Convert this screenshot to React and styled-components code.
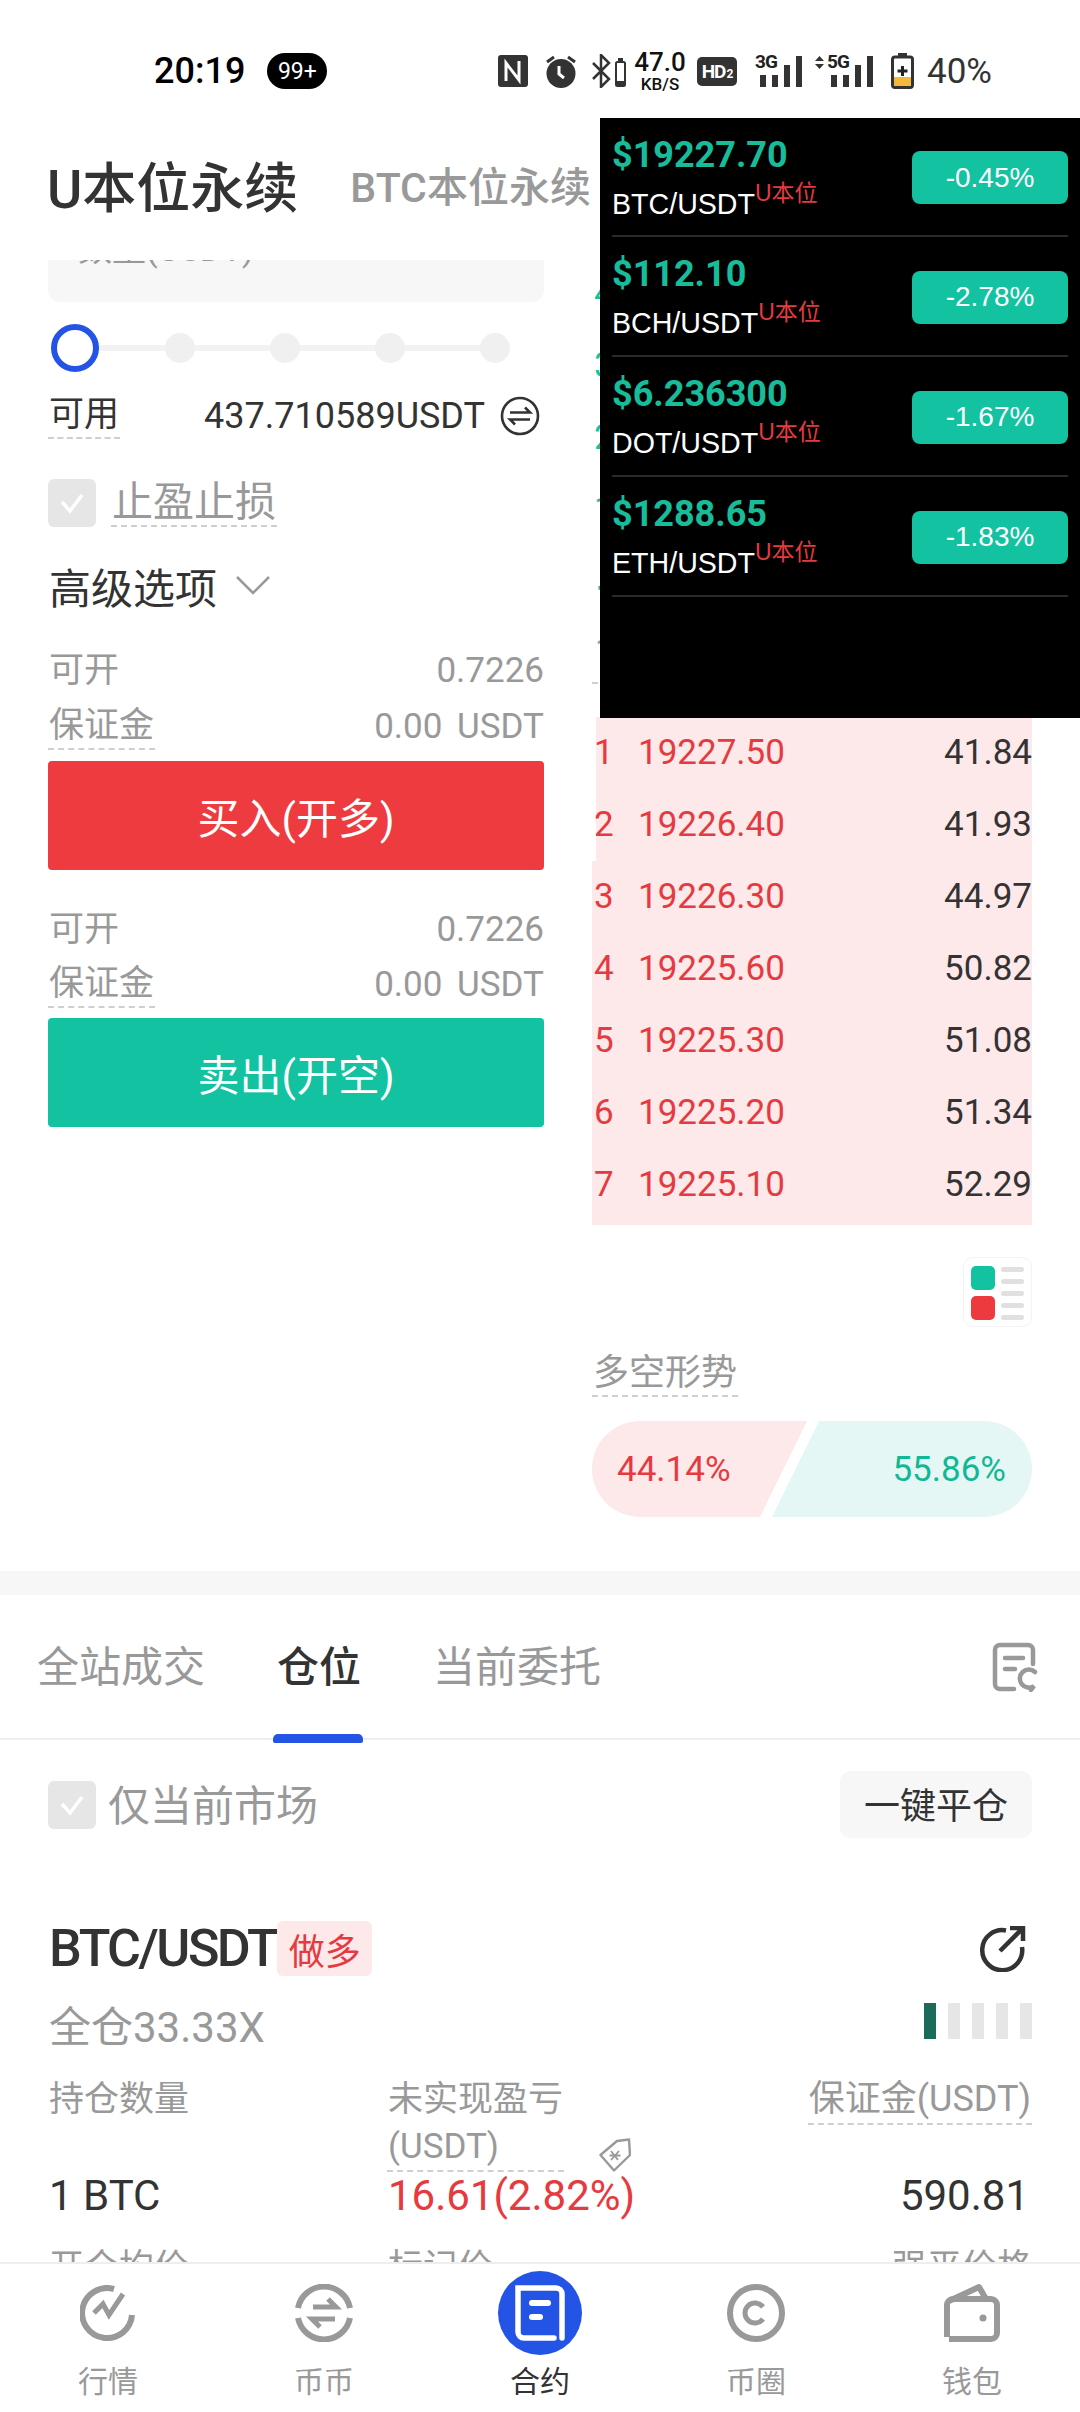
import React from "react";
import styled, { createGlobalStyle } from "styled-components";

const BLUE = "#2354e6";
const RED = "#e53a40";
const TEAL = "#12c2a0";
const DARK = "#333333";
const GRAY = "#999999";
const NUM_FONT = `Roboto, "Noto Sans CJK SC", sans-serif`;
const ARIAL_FONT = `"Liberation Sans", "Noto Sans CJK SC", sans-serif`;

const tickers = [
  { price: "$19227.70", pair: "BTC/USDT", change: "-0.45%" },
  { price: "$112.10", pair: "BCH/USDT", change: "-2.78%" },
  { price: "$6.236300", pair: "DOT/USDT", change: "-1.67%" },
  { price: "$1288.65", pair: "ETH/USDT", change: "-1.83%" },
];

const asks = [
  { n: 4, price: "19229.40", size: "39.12" },
  { n: 3, price: "19229.10", size: "36.47" },
  { n: 2, price: "19228.60", size: "28.05" },
  { n: 1, price: "19228.20", size: "21.33" },
];

const bids = [
  { n: 1, price: "19227.50", size: "41.84", depth: 99 },
  { n: 2, price: "19226.40", size: "41.93", depth: 99 },
  { n: 3, price: "19226.30", size: "44.97", depth: 100 },
  { n: 4, price: "19225.60", size: "50.82", depth: 100 },
  { n: 5, price: "19225.30", size: "51.08", depth: 100 },
  { n: 6, price: "19225.20", size: "51.34", depth: 100 },
  { n: 7, price: "19225.10", size: "52.29", depth: 100 },
];

const GlobalStyle = createGlobalStyle`
  html, body {
    margin: 0;
    padding: 0;
    background: #fff;
  }
  * {
    box-sizing: border-box;
  }
`;

const Screen = styled.div`
  position: relative;
  width: 1080px;
  height: 2412px;
  display: flex;
  flex-direction: column;
  overflow: hidden;
  background: #fff;
  color: ${DARK};
  font-family: ${NUM_FONT};
`;

/* status bar */
const StatusBar = styled.div`
  flex: none;
  height: 118px;
  padding: 24px 88px 0 154px;
  display: flex;
  align-items: center;
  color: #000;
`;

const Clock = styled.span`
  font-size: 36px;
  font-weight: 500;
`;

const Badge = styled.span`
  margin-left: 22px;
  width: 60px;
  height: 36px;
  border-radius: 18px;
  background: #000;
  color: #fff;
  font-size: 23px;
  display: flex;
  align-items: center;
  justify-content: center;
`;

const StatusRight = styled.div`
  margin-left: auto;
  display: flex;
  align-items: center;
`;

const Slot = styled.div`
  margin-left: ${(p) => p.$ml || 0}px;
  display: flex;
  align-items: center;
  position: relative;
`;

const Speed = styled.div`
  width: 46px;
  display: flex;
  flex-direction: column;
  align-items: center;
  line-height: 1;
  color: #111;
  span:first-child {
    font-size: 26px;
    font-weight: 500;
  }
  span:last-child {
    font-size: 17px;
    font-weight: 500;
    margin-top: 1px;
  }
`;

const HdBox = styled.div`
  width: 40px;
  height: 29px;
  border-radius: 5px;
  background: #333;
  color: #fff;
  font-size: 19px;
  font-weight: 700;
  letter-spacing: -1px;
  display: flex;
  align-items: center;
  justify-content: center;
  sub {
    font-size: 12px;
    line-height: 1;
    vertical-align: baseline;
    margin: 5px 0 0 1px;
  }
`;

const NetLabel = styled.span`
  position: absolute;
  top: -2px;
  left: ${(p) => p.$left}px;
  font-size: 19px;
  font-weight: 700;
  letter-spacing: -1px;
  line-height: 1;
  color: #222;
`;

const BatteryText = styled.span`
  font-size: 35px;
  color: ${DARK};
`;

/* header */
const Header = styled.div`
  flex: none;
  height: 142px;
  padding: 0 0 10px 47px;
  display: flex;
  align-items: center;
  gap: 52px;
  white-space: nowrap;
`;

const HeaderTab = styled.div`
  font-size: ${(p) => (p.$active ? 54 : 41)}px;
  font-weight: 500;
  color: ${(p) => (p.$active ? DARK : GRAY)};
`;

/* scrolling content */
const Scroll = styled.div`
  flex: 1;
  min-height: 0;
  overflow: hidden;
`;

const Trade = styled.div`
  height: 1311px;
  padding: 0 48px;
  display: flex;
  justify-content: space-between;
  align-items: flex-start;
`;

const LeftCol = styled.div`
  width: 496px;
  display: flex;
  flex-direction: column;
`;

const RightCol = styled.div`
  width: 440px;
  margin-top: -2px;
  display: flex;
  flex-direction: column;
`;

const AmountInput = styled.div`
  margin-top: -62px;
  height: 104px;
  padding: 0 30px 8px;
  border-radius: 12px;
  background: #f7f7f7;
  color: ${GRAY};
  font-size: 34px;
  display: flex;
  align-items: center;
  justify-content: space-between;
  span:last-child {
    margin-right: -4px;
  }
`;

const Slider = styled.div`
  position: relative;
  margin-top: 22px;
  height: 48px;
  padding-left: 3px;
  display: flex;
  align-items: center;
  gap: 75px;
  &::before {
    content: "";
    position: absolute;
    left: 27px;
    width: 420px;
    height: 6px;
    background: #f2f2f2;
  }
`;

const SliderHandle = styled.div`
  position: relative;
  width: 48px;
  height: 48px;
  margin-right: -9px;
  border-radius: 50%;
  border: 6px solid ${BLUE};
  background: #fff;
`;

const SliderDot = styled.div`
  position: relative;
  width: 30px;
  height: 30px;
  border-radius: 50%;
  background: #f0f0f0;
`;

const Row = styled.div`
  margin-top: ${(p) => p.$mt || 0}px;
  display: flex;
  align-items: center;
  justify-content: space-between;
`;

const Dashed = styled.span`
  display: inline-block;
  padding: 0 1px;
  font-size: ${(p) => p.$size || 35}px;
  line-height: ${(p) => p.$lh || 44}px;
  color: ${(p) => p.$color || GRAY};
  border-bottom: 2px dashed #cfcfcf;
`;

const StatLabel = styled.span`
  padding-left: 1px;
  font-size: 35px;
  line-height: 44px;
  color: ${GRAY};
`;

const StatValue = styled.span`
  font-size: 35px;
  line-height: 44px;
  word-spacing: 6px;
  color: ${GRAY};
`;

const Available = styled.div`
  padding-right: 4px;
  display: flex;
  align-items: center;
  gap: 15px;
  font-size: 36px;
  color: ${DARK};
`;

const CheckLine = styled.div`
  margin-top: 40px;
  height: 50px;
  display: flex;
  align-items: flex-start;
  gap: 15px;
`;

const CheckBox = styled.div`
  flex: none;
  width: 48px;
  height: 48px;
  border-radius: 6px;
  background: #e6e6e6;
  display: flex;
  align-items: center;
  justify-content: center;
`;

const Advanced = styled.div`
  margin-top: 29px;
  height: 54px;
  padding-left: 1px;
  display: flex;
  align-items: center;
  gap: 18px;
  font-size: 42px;
  color: ${DARK};
`;

const ActionButton = styled.div`
  margin-top: ${(p) => p.$mt}px;
  height: 109px;
  border-radius: 4px;
  background: ${(p) => (p.$buy ? "#ee3b3f" : TEAL)};
  color: #fff;
  font-size: 42px;
  display: flex;
  align-items: center;
  justify-content: center;
`;

/* order book */
const BookRow = styled.div`
  position: relative;
  display: flex;
  align-items: center;
  line-height: 72px;
  font-size: 35px;
  color: ${DARK};
  &:last-child {
    padding-bottom: ${(p) => (p.$bid ? 4 : 0)}px;
  }
`;

const DepthBar = styled.div`
  position: absolute;
  top: 0;
  right: 0;
  bottom: 0;
  background: #fde9e9;
`;

const BookIndex = styled.span`
  position: relative;
  width: 46px;
  padding-left: 2px;
  color: ${(p) => (p.$bid ? RED : TEAL)};
`;

const BookPrice = styled.span`
  position: relative;
  color: ${(p) => (p.$bid ? RED : TEAL)};
`;

const BookSize = styled.span`
  position: relative;
  margin-left: auto;
`;

const MidPrice = styled.div`
  margin-top: 26px;
  padding-left: 3px;
  font-size: 40px;
  line-height: 52px;
  font-weight: 500;
  color: ${TEAL};
`;

const MarkPrice = styled.div`
  width: 180px;
  padding: 0 0 6px 3px;
  font-size: 34px;
  line-height: 52px;
  color: ${GRAY};
  border-bottom: 2px dashed #cfcfcf;
`;

const Bids = styled.div`
  margin-top: 33px;
  display: flex;
  flex-direction: column;
`;

const LayoutToggle = styled.div`
  align-self: flex-end;
  margin-top: 32px;
  width: 69px;
  height: 70px;
  padding: 8px 7px;
  border: 1px solid #f3f3f3;
  border-radius: 10px;
  display: grid;
  grid-template-columns: 24px 23px;
  justify-content: space-between;
`;

const ToggleSquares = styled.div`
  display: flex;
  flex-direction: column;
  gap: 6px;
`;

const ToggleSquare = styled.div`
  width: 24px;
  height: 24px;
  border-radius: 5px;
  background: ${(p) => (p.$red ? "#ec3a3e" : TEAL)};
`;

const ToggleLines = styled.div`
  padding-top: 1px;
  display: flex;
  flex-direction: column;
  gap: 7px;
`;

const ToggleLine = styled.div`
  height: 5px;
  border-radius: 3px;
  background: #e0e0e0;
`;

const SentimentTitle = styled.div`
  margin-top: 24px;
`;

const Sentiment = styled.div`
  position: relative;
  margin-top: 24px;
  height: 96px;
`;

const SentimentSide = styled.div`
  position: absolute;
  top: 0;
  bottom: 0;
  ${(p) => (p.$long ? "right: 0; width: 260px;" : "left: 0; width: 215px;")}
  background: ${(p) => (p.$long ? "#e4f7f4" : "#fde9e9")};
  color: ${(p) => (p.$long ? "#12b795" : RED)};
  border-radius: ${(p) => (p.$long ? "0 48px 48px 0" : "48px 0 0 48px")};
  clip-path: ${(p) =>
    p.$long
      ? "polygon(18.1% 0, 100% 0, 100% 100%, 0 100%)"
      : "polygon(0 0, 100% 0, 78.1% 100%, 0 100%)"};
  font-size: 35px;
  display: flex;
  align-items: center;
  justify-content: ${(p) => (p.$long ? "flex-end" : "flex-start")};
  padding: ${(p) => (p.$long ? "0 26px 0 0" : "0 0 0 25px")};
`;

const Band = styled.div`
  height: 24px;
  background: #f7f7f7;
`;

/* positions */
const Tabs = styled.div`
  height: 145px;
  padding: 0 42px 6px 37px;
  border-bottom: 2px solid #eeeeee;
  display: flex;
  align-items: center;
  gap: 72px;
`;

const Tab = styled.div`
  position: relative;
  font-size: 42px;
  font-weight: ${(p) => (p.$active ? 500 : 400)};
  color: ${(p) => (p.$active ? DARK : GRAY)};
  ${(p) =>
    p.$active &&
    `
    &::after {
      content: "";
      position: absolute;
      left: -4px;
      right: -2px;
      bottom: -49px;
      height: 9px;
      border-radius: 5px 5px 2px 2px;
      background: ${BLUE};
    }
  `}
`;

const TabIcon = styled.div`
  margin: 6px 0 0 auto;
  display: flex;
`;

const FilterRow = styled.div`
  height: 129px;
  padding: 0 48px;
  display: flex;
  align-items: center;
`;

const FilterLabel = styled.span`
  margin-left: 12px;
  padding-bottom: 4px;
  font-size: 42px;
  color: ${GRAY};
`;

const CloseAll = styled.div`
  margin-left: auto;
  width: 192px;
  height: 67px;
  padding-bottom: 4px;
  border-radius: 10px;
  background: #f7f7f7;
  font-size: 36px;
  display: flex;
  align-items: center;
  justify-content: center;
`;

const Position = styled.div`
  padding: 52px 48px 0;
`;

const PositionHead = styled.div`
  height: 55px;
  display: flex;
  align-items: center;
`;

const PairName = styled.div`
  padding-left: 1px;
  font-size: 52px;
  font-weight: 500;
  letter-spacing: -2.5px;
`;

const SideTag = styled.div`
  margin-left: 1px;
  width: 95px;
  height: 55px;
  border-radius: 6px;
  background: #fde9e9;
  color: ${RED};
  font-size: 36px;
  display: flex;
  align-items: center;
  justify-content: center;
`;

const ShareIcon = styled.div`
  margin: 0 6px 0 auto;
  display: flex;
`;

const Leverage = styled.div`
  margin-top: 27px;
  height: 50px;
  padding-left: 1px;
  display: flex;
  align-items: flex-start;
  justify-content: space-between;
  font-size: 42px;
  line-height: 50px;
  color: ${GRAY};
`;

const RiskBars = styled.div`
  display: flex;
  gap: 12px;
`;

const RiskBar = styled.div`
  width: 12px;
  height: 36px;
  background: ${(p) => (p.$on ? "#1c6b5a" : "#e6e6e6")};
`;

const PositionGrid = styled.div`
  margin-top: 23px;
  display: grid;
  grid-template-columns: 339px 1fr auto;
  align-items: start;
`;

const PlainLabel = styled.div`
  padding-left: 1px;
  font-size: 35px;
  line-height: 47px;
  color: ${GRAY};
`;

const PnlLabel = styled.div`
  display: flex;
  align-items: flex-end;
`;

const TagIcon = styled.div`
  margin-left: 35px;
  display: flex;
`;

const Value = styled.div`
  padding-left: ${(p) => (p.$right ? 0 : 1)}px;
  padding-right: ${(p) => (p.$right ? 3 : 0)}px;
  text-align: ${(p) => (p.$right ? "right" : "left")};
  font-size: 42px;
  line-height: 48px;
  color: ${(p) => (p.$red ? RED : DARK)};
`;

const NextLabel = styled(PlainLabel)`
  margin-top: 24px;
  text-align: ${(p) => (p.$right ? "right" : "left")};
`;

/* bottom nav */
const Nav = styled.div`
  flex: none;
  height: 150px;
  padding-top: 7px;
  border-top: 2px solid #eeeeee;
  background: #fff;
  display: flex;
`;

const NavItem = styled.div`
  flex: 1;
  display: flex;
  flex-direction: column;
  align-items: center;
`;

const NavIcon = styled.div`
  width: 84px;
  height: 84px;
  display: flex;
  align-items: center;
  justify-content: center;
  border-radius: 50%;
  background: ${(p) => (p.$active ? BLUE : "transparent")};
`;

const NavLabel = styled.span`
  margin-top: 7px;
  font-size: 30px;
  line-height: 40px;
  color: ${(p) => (p.$active ? DARK : GRAY)};
`;

/* floating ticker */
const Ticker = styled.div`
  position: absolute;
  top: 118px;
  left: 600px;
  right: 0;
  height: 600px;
  padding: 0 12px;
  background: #000;
  font-family: ${ARIAL_FONT};
`;

const TickerRow = styled.div`
  height: 120px;
  border-bottom: 2px solid #2a2a2a;
  display: flex;
  align-items: center;
  justify-content: space-between;
  &:first-child {
    height: 119px;
  }
`;

const TickerInfo = styled.div`
  margin-bottom: -1px;
`;

const TickerPrice = styled.div`
  font-family: ${NUM_FONT};
  font-size: 36px;
  font-weight: 700;
  line-height: 44px;
  color: #17bd9b;
`;

const TickerPair = styled.div`
  margin-top: 9px;
  font-size: 28.6px;
  line-height: 36px;
  color: #fff;
  display: flex;
`;

const UnitTag = styled.span`
  font-size: 23px;
  line-height: 26px;
  margin-top: -6px;
  color: ${RED};
`;

const ChangePill = styled.div`
  margin-top: 2px;
  width: 156px;
  height: 53px;
  border-radius: 8px;
  background: ${TEAL};
  color: #fff;
  font-size: 28px;
  display: flex;
  align-items: center;
  justify-content: center;
`;

const NfcIcon = () => (
  <svg width="30" height="32" viewBox="0 0 30 32">
    <rect width="30" height="32" rx="3" fill="#333" />
    <path d="M8 26V8l13 17V6" fill="none" stroke="#fff" strokeWidth="3" />
  </svg>
);

const AlarmIcon = () => (
  <svg width="32" height="34" viewBox="0 0 32 34">
    <circle cx="16" cy="19.5" r="14.5" fill="#333" />
    <path d="M2 8l7-5M30 8l-7-5" stroke="#333" strokeWidth="3" />
    <path d="M14 12v8l5 4" fill="none" stroke="#fff" strokeWidth="3" />
  </svg>
);

const BluetoothIcon = () => (
  <svg width="34" height="34" viewBox="0 0 34 34">
    <path d="M1 9l16 16-8 8V1l8 8L1 25" fill="none" stroke="#333" strokeWidth="2.5" />
    <rect x="24" y="8" width="9" height="24" rx="1.5" fill="none" stroke="#333" strokeWidth="2" />
    <rect x="26" y="4" width="5" height="3" fill="#333" />
    <rect x="24" y="27" width="9" height="5" fill="#333" />
  </svg>
);

const SignalBars = ({ width, x, arrows }) => (
  <svg width={width} height="34" viewBox={`0 0 ${width} 34`}>
    {arrows && <path d="M4.5 2l4.5 5H0zM4.5 15L0 10h9z" fill="#333" />}
    <rect x={x} y="21" width="6" height="12" fill="#333" />
    <rect x={x + 12} y="21" width="6" height="12" fill="#333" />
    <rect x={x + 24} y="11" width="6" height="22" fill="#333" />
    <rect x={x + 36} y="2" width="6" height="31" fill="#333" />
  </svg>
);

const BatteryIcon = () => (
  <svg width="23" height="36" viewBox="0 0 23 36">
    <rect x="7" y="0" width="9" height="4" fill="#333" />
    <rect x="1.5" y="4" width="20" height="30.5" rx="2.5" fill="#fff" stroke="#333" strokeWidth="3" />
    <path d="M3 24h17v8a1 1 0 0 1-1 1H4a1 1 0 0 1-1-1z" fill="#f5b93a" />
    <path d="M11.5 13v10M6.5 18h10" stroke="#222" strokeWidth="3" />
  </svg>
);

const SwapIcon = () => (
  <svg width="40" height="40" viewBox="0 0 40 40" fill="none" stroke="#333" strokeWidth="2.6">
    <circle cx="20" cy="20" r="18" />
    <path d="M10 16.5h20l-5-5M30 23.5H10l5 5" />
  </svg>
);

const CheckMark = ({ size = 28 }) => (
  <svg width={size} height={size} viewBox="0 0 28 28" fill="none" stroke="#fff" strokeWidth="3.5">
    <path d="M4 13l8 9L24 6" />
  </svg>
);

const Chevron = () => (
  <svg width="36" height="22" viewBox="0 0 36 22" fill="none" stroke={GRAY} strokeWidth="2.5">
    <path d="M2 3l16 16L34 3" />
  </svg>
);

const RecordIcon = () => (
  <svg width="46" height="50" viewBox="0 0 46 50" fill="none" stroke={GRAY} strokeWidth="4.5" strokeLinecap="round">
    <path d="M22 47H8a5 5 0 0 1-5-5V8a5 5 0 0 1 5-5h28a5 5 0 0 1 5 5v14" />
    <path d="M13 16h18M13 27h10" />
    <path d="M43 30a9 9 0 1 0-1 14l-3 4" />
  </svg>
);

const ShareGlyph = () => (
  <svg width="48" height="46" viewBox="0 0 48 46" fill="none" stroke="#333" strokeWidth="4.5">
    <path d="M28 4.5A20 20 0 1 0 44 21" />
    <path d="M22 25L44 3M32 2h13v13" />
  </svg>
);

const TagGlyph = () => (
  <svg width="32" height="34" viewBox="0 0 32 34" fill="none" stroke={GRAY} strokeWidth="2.4" strokeLinejoin="round">
    <path d="M1.5 17L18 3l12-1.5 1 15.5L15 32.5z" />
    <path d="M12 13l7 9M20 13l-8 9M10.5 17.5h11" strokeWidth="1.8" />
  </svg>
);

const MarketIcon = () => (
  <svg width="56" height="56" viewBox="0 0 56 56" fill="none" stroke={GRAY} strokeWidth="6">
    <path d="M34 4a25 25 0 1 0 18 26" />
    <path d="M14 28l9-9 6 11 14-21" strokeWidth="5" />
  </svg>
);

const SpotIcon = () => (
  <svg width="58" height="58" viewBox="0 0 58 58" fill="none" stroke={GRAY} strokeWidth="6">
    <path d="M3 24A26.5 26.5 0 0 1 55 24M55 34A26.5 26.5 0 0 1 3 34" />
    <path d="M18 23h23l-8-8M40 35H17l8 8" strokeWidth="5" />
  </svg>
);

const ContractIcon = () => (
  <svg width="52" height="60" viewBox="0 0 52 60" fill="none" stroke="#fff">
    <path d="M40 55H10a6 6 0 0 1-6-6V5h38a6 6 0 0 1 6 6v44" strokeWidth="5.5" strokeLinecap="round" />
    <path d="M18 20h16" strokeWidth="6" strokeLinecap="round" />
    <path d="M18 34h8" strokeWidth="6" strokeLinecap="round" />
  </svg>
);

const CircleIcon = () => (
  <svg width="58" height="58" viewBox="0 0 58 58" fill="none" stroke={GRAY} strokeWidth="6">
    <circle cx="29" cy="29" r="26" />
    <path d="M36 23a10 10 0 1 0 0 12" strokeWidth="5" />
  </svg>
);

const WalletIcon = () => (
  <svg width="58" height="60" viewBox="0 0 58 60" fill="none" stroke={GRAY} strokeWidth="6">
    <path d="M4 54V22a6 6 0 0 1 6-6h38a6 6 0 0 1 6 6v28a6 6 0 0 1-6 6H6" />
    <path d="M6 18L36 4l7 12" strokeLinejoin="round" />
    <circle cx="40" cy="35" r="3.5" fill={GRAY} stroke="none" />
  </svg>
);

const navItems = [
  { label: "行情", icon: <MarketIcon /> },
  { label: "币币", icon: <SpotIcon /> },
  { label: "合约", icon: <ContractIcon />, active: true },
  { label: "币圈", icon: <CircleIcon /> },
  { label: "钱包", icon: <WalletIcon /> },
];

const OrderRow = ({ row, bid }) => (
  <BookRow $bid={bid}>
    {bid && <DepthBar style={{ width: `${row.depth}%` }} />}
    <BookIndex $bid={bid}>{row.n}</BookIndex>
    <BookPrice $bid={bid}>{row.price}</BookPrice>
    <BookSize>{row.size}</BookSize>
  </BookRow>
);

const StatBlock = ({ mt, gap }) => (
  <>
    <Row $mt={mt}>
      <StatLabel>可开</StatLabel>
      <StatValue>0.7226</StatValue>
    </Row>
    <Row $mt={gap}>
      <Dashed>保证金</Dashed>
      <StatValue>0.00 USDT</StatValue>
    </Row>
  </>
);

export default function App() {
  return (
    <Screen>
      <GlobalStyle />
      <StatusBar>
        <Clock>20:19</Clock>
        <Badge>99+</Badge>
        <StatusRight>
          <Slot><NfcIcon /></Slot>
          <Slot $ml={17}><AlarmIcon /></Slot>
          <Slot $ml={15}><BluetoothIcon /></Slot>
          <Slot $ml={11}>
            <Speed>
              <span>47.0</span>
              <span>KB/S</span>
            </Speed>
          </Slot>
          <Slot $ml={14}><HdBox>HD<sub>2</sub></HdBox></Slot>
          <Slot $ml={18}>
            <SignalBars width={49} x={5} />
            <NetLabel $left={0}>3G</NetLabel>
          </Slot>
          <Slot $ml={11}>
            <SignalBars width={59} x={16} arrows />
            <NetLabel $left={12}>5G</NetLabel>
          </Slot>
          <Slot $ml={17}><BatteryIcon /></Slot>
          <Slot $ml={13}><BatteryText>40%</BatteryText></Slot>
        </StatusRight>
      </StatusBar>

      <Header>
        <HeaderTab $active>U本位永续</HeaderTab>
        <HeaderTab>BTC本位永续</HeaderTab>
      </Header>

      <Scroll>
        <Trade>
          <LeftCol>
            <AmountInput>
              <span>数量(USDT)</span>
              <span>+</span>
            </AmountInput>
            <Slider>
              <SliderHandle />
              <SliderDot />
              <SliderDot />
              <SliderDot />
              <SliderDot />
            </Slider>
            <Row $mt={21}>
              <Dashed $color={DARK}>可用</Dashed>
              <Available>
                437.710589USDT
                <SwapIcon />
              </Available>
            </Row>
            <CheckLine>
              <CheckBox><CheckMark /></CheckBox>
              <Dashed $size={41} $lh={46}>止盈止损</Dashed>
            </CheckLine>
            <Advanced>
              高级选项
              <Chevron />
            </Advanced>
            <StatBlock mt={37} gap={11} />
            <ActionButton $buy $mt={11}>买入(开多)</ActionButton>
            <StatBlock mt={38} gap={10} />
            <ActionButton $mt={10}>卖出(开空)</ActionButton>
          </LeftCol>

          <RightCol>
            {asks.map((row) => (
              <OrderRow key={row.n} row={row} />
            ))}
            <MidPrice>19227.70</MidPrice>
            <MarkPrice>19230.10</MarkPrice>
            <Bids>
              {bids.map((row) => (
                <OrderRow key={row.n} row={row} bid />
              ))}
            </Bids>
            <LayoutToggle>
              <ToggleSquares>
                <ToggleSquare />
                <ToggleSquare $red />
              </ToggleSquares>
              <ToggleLines>
                <ToggleLine />
                <ToggleLine />
                <ToggleLine />
                <ToggleLine />
                <ToggleLine />
              </ToggleLines>
            </LayoutToggle>
            <SentimentTitle>
              <Dashed $size={36}>多空形势</Dashed>
            </SentimentTitle>
            <Sentiment>
              <SentimentSide>44.14%</SentimentSide>
              <SentimentSide $long>55.86%</SentimentSide>
            </Sentiment>
          </RightCol>
        </Trade>

        <Band />

        <Tabs>
          <Tab>全站成交</Tab>
          <Tab $active>仓位</Tab>
          <Tab>当前委托</Tab>
          <TabIcon><RecordIcon /></TabIcon>
        </Tabs>

        <FilterRow>
          <CheckBox><CheckMark /></CheckBox>
          <FilterLabel>仅当前市场</FilterLabel>
          <CloseAll>一键平仓</CloseAll>
        </FilterRow>

        <Position>
          <PositionHead>
            <PairName>BTC/USDT</PairName>
            <SideTag>做多</SideTag>
            <ShareIcon><ShareGlyph /></ShareIcon>
          </PositionHead>
          <Leverage>
            全仓33.33X
            <RiskBars>
              <RiskBar $on />
              <RiskBar />
              <RiskBar />
              <RiskBar />
              <RiskBar />
            </RiskBars>
          </Leverage>
          <PositionGrid>
            <PlainLabel>持仓数量</PlainLabel>
            <PnlLabel>
              <Dashed $size={35} $lh={47}>未实现盈亏<br />(USDT)</Dashed>
              <TagIcon><TagGlyph /></TagIcon>
            </PnlLabel>
            <div>
              <Dashed $size={36} $lh={47}>保证金(USDT)</Dashed>
            </div>
            <Value>1 BTC</Value>
            <Value $red>16.61(2.82%)</Value>
            <Value $right>590.81</Value>
            <NextLabel>开仓均价</NextLabel>
            <NextLabel>标记价</NextLabel>
            <NextLabel $right>强平价格</NextLabel>
          </PositionGrid>
        </Position>
      </Scroll>

      <Nav>
        {navItems.map((item) => (
          <NavItem key={item.label}>
            <NavIcon $active={item.active}>{item.icon}</NavIcon>
            <NavLabel $active={item.active}>{item.label}</NavLabel>
          </NavItem>
        ))}
      </Nav>

      <Ticker>
        {tickers.map((t) => (
          <TickerRow key={t.pair}>
            <TickerInfo>
              <TickerPrice>{t.price}</TickerPrice>
              <TickerPair>
                {t.pair}
                <UnitTag>U本位</UnitTag>
              </TickerPair>
            </TickerInfo>
            <ChangePill>{t.change}</ChangePill>
          </TickerRow>
        ))}
      </Ticker>
    </Screen>
  );
}
